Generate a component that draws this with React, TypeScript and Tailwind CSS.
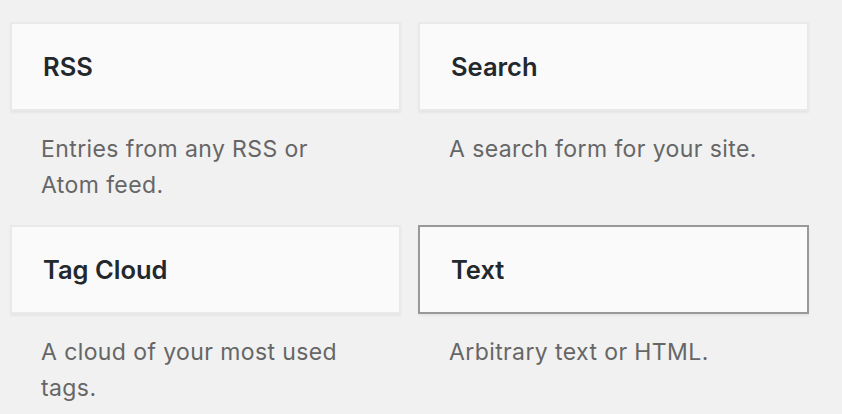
import React from "react";

const items = [
  { title: "RSS", desc: ["Entries from any RSS or", "Atom feed."], active: false },
  { title: "Search", desc: ["A search form for your site."], active: false },
  { title: "Tag Cloud", desc: ["A cloud of your most used", "tags."], active: false },
  { title: "Text", desc: ["Arbitrary text or HTML."], active: true },
];

export default function App() {
  return (
    <div
      className="w-[842px] h-[414px] overflow-hidden bg-[#f1f1f1] pl-[10px] pt-[22px]"
      style={{ fontFamily: "Inter, 'Liberation Sans', Arial, sans-serif" }}
    >
      <div className="grid grid-cols-[391px_391px] gap-x-[17px]">
        {items.map((it) => (
          <div key={it.title} className="h-[203px]">
            <div
              className={
                "h-[89px] bg-[#fafafa] border-2 flex items-center pl-[31px] pt-[1px] shadow-[0_2px_2px_rgba(0,0,0,0.05)] " +
                (it.active ? "border-[#999999]" : "border-[#e9e9e9]")
              }
            >
              <span className="text-[25.5px] font-semibold text-[#23282d]">{it.title}</span>
            </div>
            <div className="pt-[20px] pl-[31px] text-[23px] leading-[36px] text-[#666666] tracking-[0.4px]">
              {it.desc.map((l) => (
                <div key={l}>{l}</div>
              ))}
            </div>
          </div>
        ))}
      </div>
    </div>
  );
}
